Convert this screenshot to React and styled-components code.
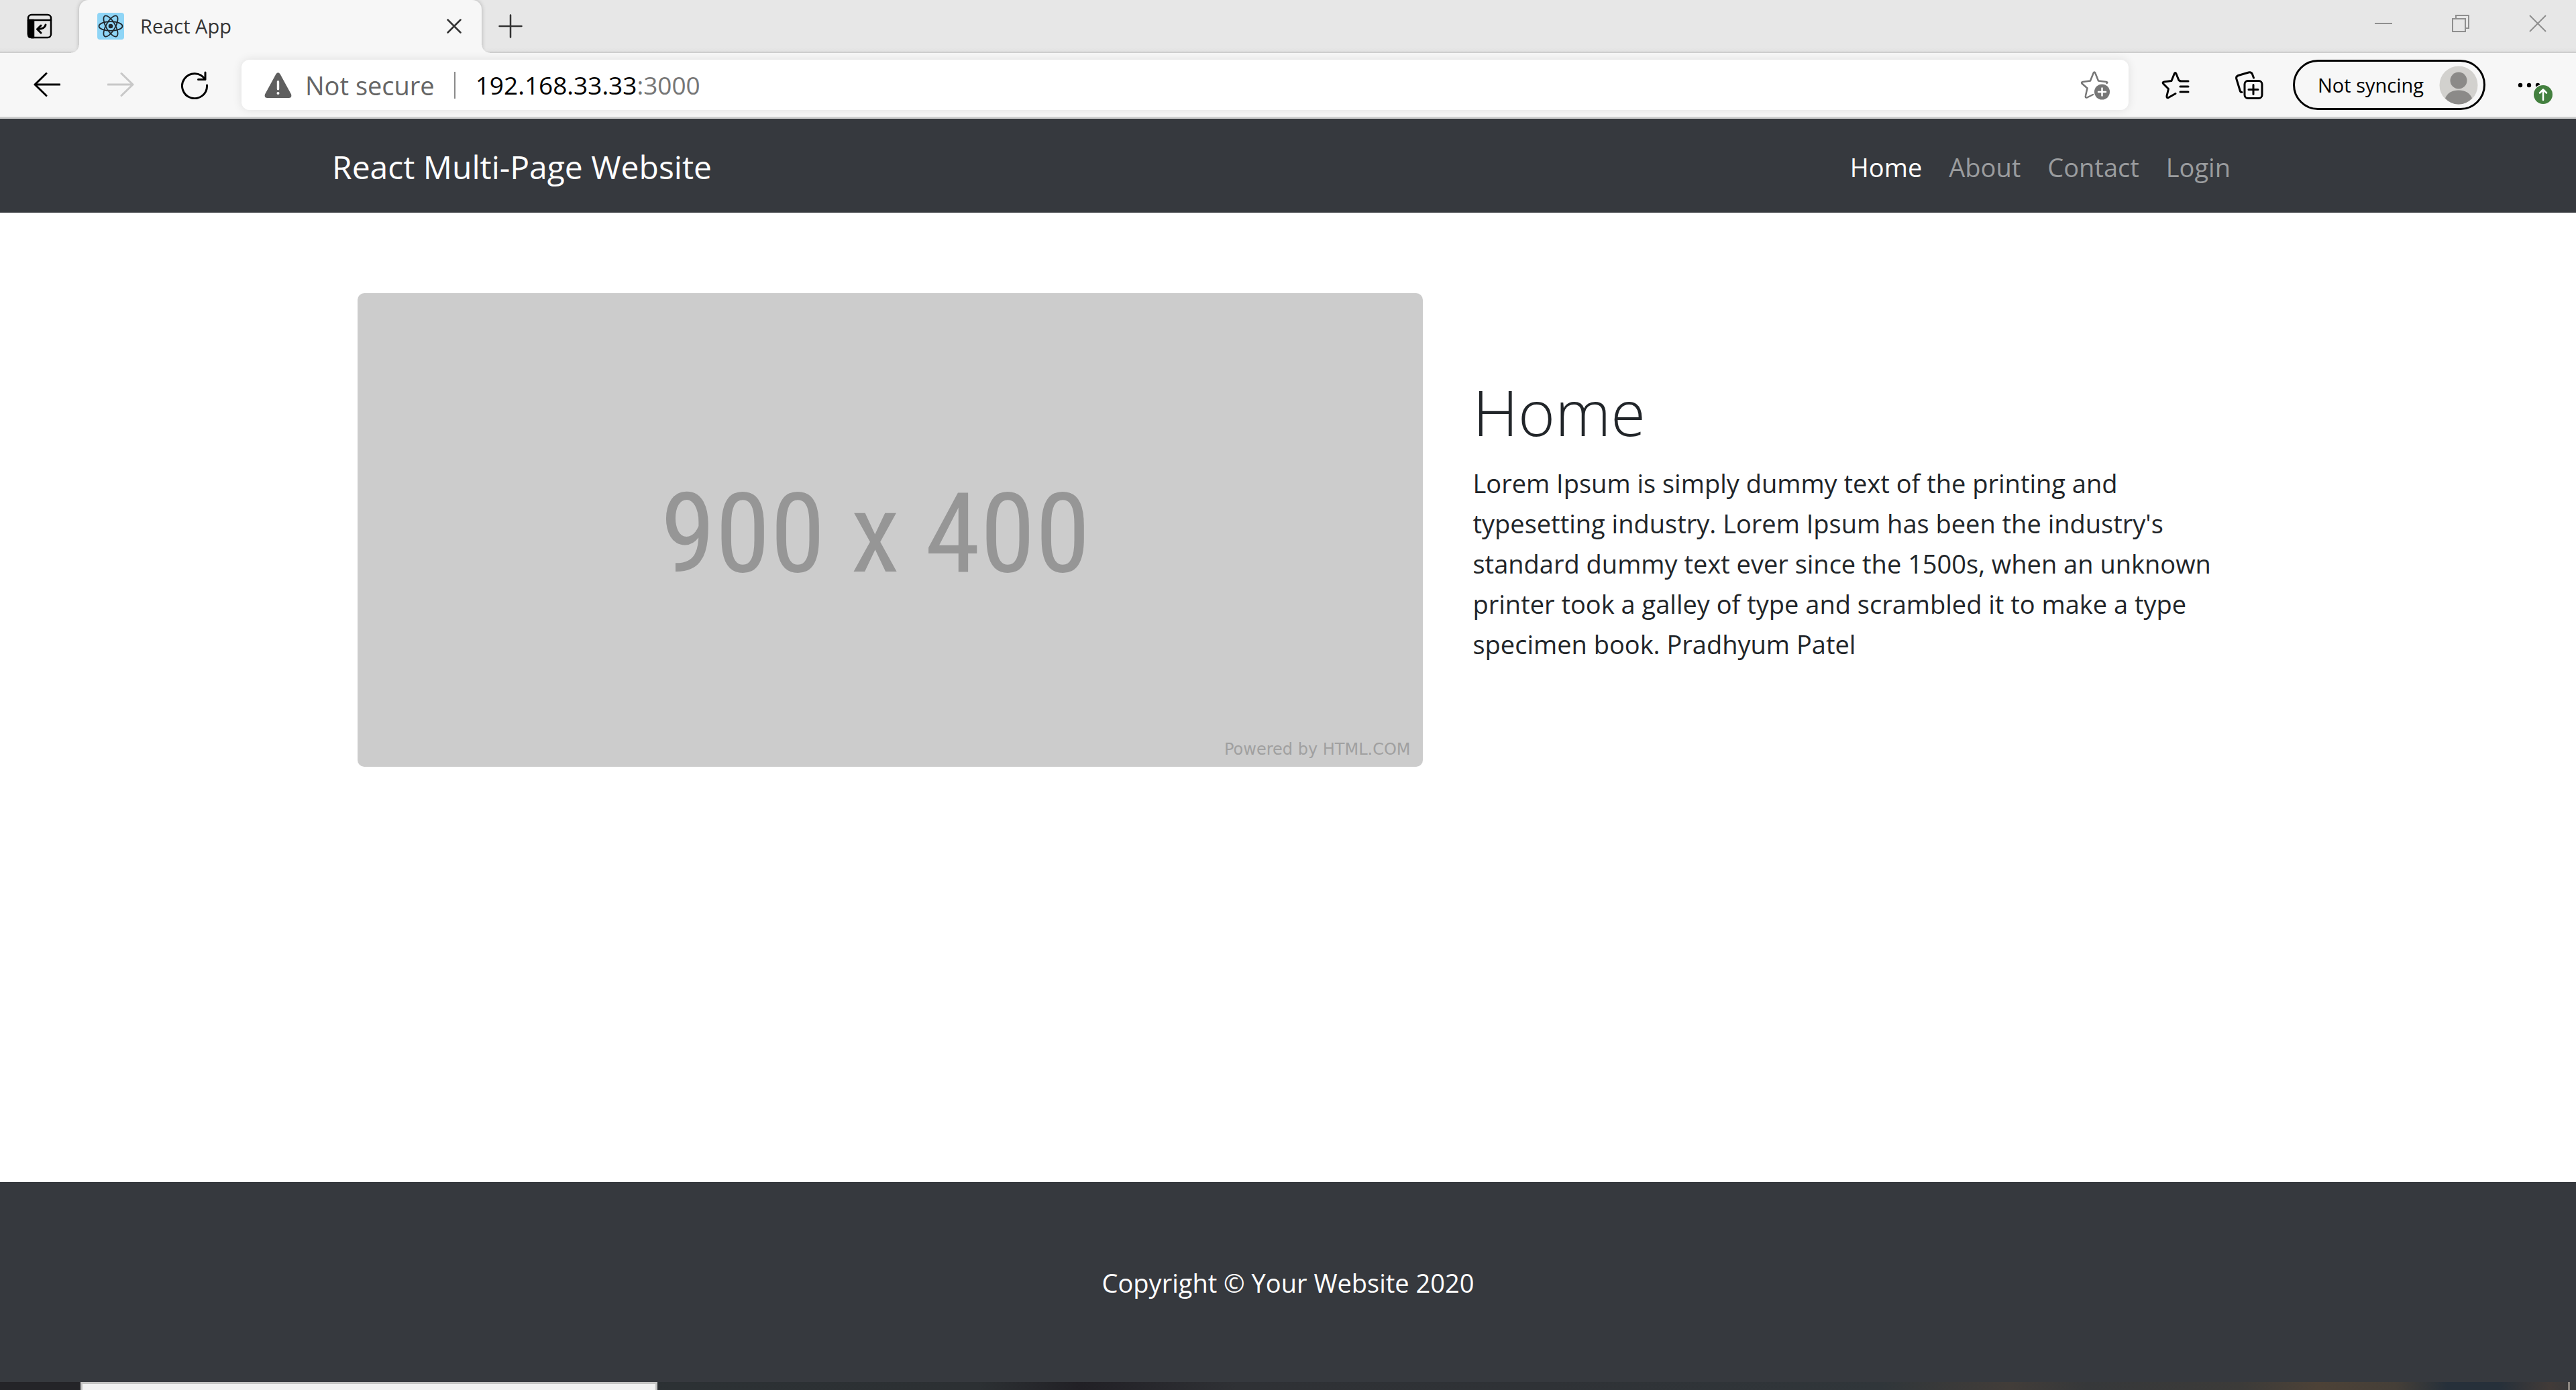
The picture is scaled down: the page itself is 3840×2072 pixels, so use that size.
import React from "react";
import styled, { createGlobalStyle } from "styled-components";

const GlobalStyle = createGlobalStyle`
  * {
    box-sizing: border-box;
  }
  body {
    margin: 0;
    background: #fff;
    color: #212529;
    font-family: "Open Sans", "Noto Sans", sans-serif;
    font-size: 38px;
    line-height: 60px;
  }
`;

const Window = styled.div`
  display: flex;
  flex-direction: column;
  min-height: 100vh;
`;

/* ---------- browser chrome ---------- */

const BareButton = styled.button`
  display: flex;
  align-items: center;
  justify-content: center;
  flex: none;
  padding: 0;
  border: 0;
  background: none;
  color: inherit;
  font: inherit;
`;

const TitleBar = styled.header`
  display: flex;
  height: 79px;
  color: #333;
  background: linear-gradient(#e7e7e7 71px, #e2e2e2 76px, #c8c8c8);
`;

const TitleButton = styled(BareButton)`
  width: ${(p) => p.$width}px;
  height: ${(p) => p.$height || 77}px;
  color: ${(p) => p.$color || "#333"};
`;

const Tab = styled.div`
  position: relative;
  display: flex;
  align-items: center;
  gap: 24px;
  width: 600px;
  padding: 0 30px 2px 27px;
  border-radius: 14px 14px 0 0;
  background: #f7f7f7;
  box-shadow: 0 0 6px rgba(0, 0, 0, 0.25);
  font-size: 29px;

  &::before,
  &::after {
    content: "";
    position: absolute;
    bottom: 0;
    width: 12px;
    height: 12px;
  }
  &::before {
    right: 100%;
    background: radial-gradient(circle at 0 0, transparent 11px, #f7f7f7 12px);
  }
  &::after {
    left: 100%;
    background: radial-gradient(circle at 100% 0, transparent 11px, #f7f7f7 12px);
  }
`;

const TabTitle = styled.span`
  flex: 1;
`;

const WindowControls = styled.div`
  display: flex;
  margin-left: auto;
`;

const Toolbar = styled.div`
  position: relative;
  display: flex;
  align-items: center;
  height: 98px;
  padding: 0 15px;
  border-bottom: 3px solid #cecfcf;
  background: #f7f7f7;
  color: #000;
`;

const ToolButton = styled(BareButton)`
  width: 110px;
  height: 75px;
  color: ${(p) => (p.$faded ? "#c8c8c8" : "#000")};
`;

const AddressBar = styled.div`
  display: flex;
  align-items: center;
  flex: 1;
  height: 75px;
  margin: 0 15px;
  padding: 0 28px 0 34px;
  border-radius: 12px;
  background: #fff;
  box-shadow: 0 0 14px rgba(0, 0, 0, 0.1);
  color: #666;
`;

const Security = styled(BareButton)`
  gap: 20px;
  padding-right: 29px;
  border-right: 2px solid #8a8a8a;
  height: 40px;
`;

const Url = styled.label`
  display: flex;
  align-items: center;
  flex: 1;
  padding-left: 30px;
  font-size: 37px;
`;

const UrlInput = styled.input`
  field-sizing: content;
  padding: 0;
  border: 0;
  outline: 0;
  background: none;
  color: #000;
  font: inherit;
`;

const UrlPort = styled.span`
  color: #767676;
`;

const Profile = styled(BareButton)`
  justify-content: space-between;
  width: 287px;
  height: 75px;
  margin: 0 10px;
  padding: 0 8px 0 34px;
  border: 3px solid #000;
  border-radius: 38px;
  font-size: 29px;
`;

/* ---------- web page ---------- */

const NavBar = styled.nav`
  padding: 22px 0 18px;
  background: #36393e;
  color: #fff;
`;

const Container = styled.div`
  display: flex;
  align-items: center;
  width: 100%;
  max-width: 2850px;
  margin: 0 auto;
`;

const Brand = styled.a`
  color: #fff;
  font-size: 48px;
  line-height: 100px;
  text-decoration: none;
`;

const NavList = styled.ul`
  display: flex;
  margin: 0 0 0 auto;
  padding: 0;
  list-style: none;
`;

const NavLink = styled.a`
  display: block;
  padding: 20px;
  color: ${(p) => (p.$active ? "#fff" : "#9a9c9e")};
  text-decoration: none;
`;

const Main = styled.main`
  flex: 1;
  padding: 120px 0;
`;

const Column = styled.div`
  flex: none;
  width: calc(100% * ${(p) => p.$span} / 12);
  padding: 0 37px 0 38px;
`;

const Placeholder = styled.figure`
  display: grid;
  grid-template-rows: 1fr auto 1fr;
  aspect-ratio: 900 / 400;
  margin: 0;
  padding: 22px 18px 10px;
  border-radius: 10px;
  background: #ccc;
  color: #969696;
`;

const PlaceholderSize = styled.div`
  grid-row: 2;
  padding-right: 44px;
  font-family: "Roboto Condensed", "Liberation Sans Narrow", "Liberation Sans", sans-serif;
  font-size: 166px;
  line-height: 180px;
  text-align: center;
`;

const PlaceholderCredit = styled.figcaption`
  grid-row: 3;
  align-self: end;
  color: #a0a0a0;
  font-family: "DejaVu Sans", sans-serif;
  font-size: 24px;
  line-height: 32px;
  text-align: right;
`;

const Title = styled.h1`
  margin: 0 0 12px;
  font-size: 94px;
  font-weight: 300;
  line-height: 128px;
`;

const Paragraph = styled.p`
  margin: 0 0 40px;
`;

const Footer = styled.footer`
  padding: 120px 0 118px;
  background: #36393e;
  color: #fff;
  text-align: center;
`;

/* ---------- desktop behind the window ---------- */

const Desktop = styled.div`
  display: flex;
  height: 12px;
  padding: 0 9px 0 120px;
  justify-content: space-between;
  background: linear-gradient(
    90deg,
    #242428 0%,
    #242428 10%,
    #2c3134 26%,
    #2c3033 38%,
    #212025 42%,
    #2f3135 48%,
    #2f3236 60%,
    #30363a 73%,
    #423d39 78%,
    #36383a 81%,
    #3c3b39 87%,
    #4d4237 90%,
    #453f38 93%,
    #26303a 95%,
    #26303a 97%,
    #423b38 99%,
    #36393c 100%
  );
`;

const BackgroundWindow = styled.div`
  width: 860px;
  border: 3px solid #c4c4c3;
  border-bottom: 0;
  background: #f2f2f2;
`;

const DesktopEdge = styled.div`
  width: 3px;
  background: #8c8680;
`;

/* ---------- icons ---------- */

const Icon = ({ size = 40, height, sw = 2.5, children, ...rest }) => (
  <svg
    width={size}
    height={height || size}
    viewBox={`0 0 ${size} ${height || size}`}
    fill="none"
    stroke="currentColor"
    strokeWidth={sw}
    strokeLinecap="round"
    strokeLinejoin="round"
    aria-hidden="true"
    {...rest}
  >
    {children}
  </svg>
);

const TabActionsIcon = () => (
  <Icon size={38} color="#000">
    <rect x="2" y="2" width="34" height="34" rx="5" />
    <path d="M2 10H36" />
    <path d="M2 10H10V36H7Q2 36 2 31Z" fill="currentColor" />
    <path d="M28 17Q27 23 16 23.500M21 18L15.500 23.500L21 29" strokeWidth="3" />
  </Icon>
);

const ReactIcon = () => (
  <Icon sw={1.8} color="#20262b">
    <rect width="40" height="40" rx="4" fill="#8fd5f6" stroke="none" />
    <ellipse cx="20" cy="20" rx="17.500" ry="6.800" />
    <ellipse cx="20" cy="20" rx="17.500" ry="6.800" transform="rotate(60 20 20)" />
    <ellipse cx="20" cy="20" rx="17.500" ry="6.800" transform="rotate(120 20 20)" />
    <circle cx="20" cy="20" r="3.300" fill="currentColor" stroke="none" />
  </Icon>
);

const CloseTabIcon = () => (
  <Icon size={22}>
    <path d="M1.500 1.500L20.500 20.500M20.500 1.500L1.500 20.500" />
  </Icon>
);

const PlusIcon = () => (
  <Icon size={36}>
    <path d="M18 1.500V34.500M1.500 18H34.500" />
  </Icon>
);

const MinimizeIcon = () => (
  <Icon size={26} sw={2} strokeLinecap="butt">
    <path d="M0 13H26" />
  </Icon>
);

const RestoreIcon = () => (
  <Icon size={26} sw={2} strokeLinecap="butt" strokeLinejoin="miter">
    <rect x="1" y="6" width="19" height="19" />
    <path d="M6 6V1H25V20H20" />
  </Icon>
);

const CloseWindowIcon = () => (
  <Icon size={26} sw={2} strokeLinecap="butt">
    <path d="M1 1L25 25M25 1L1 25" />
  </Icon>
);

const BackIcon = () => (
  <Icon sw={3}>
    <path d="M19 2.500L2 19L19 35.500M2 19H39" />
  </Icon>
);

const ForwardIcon = () => (
  <Icon sw={3}>
    <path d="M21 2.500L38 19L21 35.500M38 19H1" />
  </Icon>
);

const ReloadIcon = () => (
  <Icon size={42} sw={3}>
    <path d="M36.500 12A18.500 18.500 0 1 0 39.500 21M37 2V12.500H26.500" />
  </Icon>
);

const WarningIcon = () => (
  <Icon size={41} height={38} fill="#5f5f5f" stroke="none">
    <path d="M17.500 2.200Q20.500 -1.500 23.500 2.200L40 32.500Q41.500 38 36.500 38H4.500Q-0.500 38 1 32.500Z" />
    <rect x="18.800" y="12" width="3.400" height="14.500" rx="1.700" fill="#fff" />
    <circle cx="20.500" cy="31" r="2" fill="#fff" />
  </Icon>
);

const AddFavoriteIcon = () => (
  <Icon size={44} color="#767676">
    <path d="M19 36L10 40.500Q7 41 8 37.500L10.500 26.500L2.500 19.500Q1 17.500 4 17L15 15.500L19.800 3.500Q21 1.500 22.200 3.500L27 15.500L38.500 17Q41.500 17.500 39.500 19" />
    <circle cx="32.500" cy="32" r="11.500" fill="currentColor" stroke="none" />
    <path d="M32.500 26.500V37.500M27 32H38" stroke="#fff" />
  </Icon>
);

const FavoritesIcon = () => (
  <Icon size={42} sw={3}>
    <path d="M28 14.500L26 13.800L21.800 3.500Q20.600 1.500 19.400 3.500L15 14.500L4 16Q0.800 16.500 3 19L10.500 26.500L8 37Q7.500 40.500 10.500 39.500L21 33.500" />
    <path d="M28 15H40M28 23H40M28 31H40" />
  </Icon>
);

const CollectionsIcon = () => (
  <Icon size={42} sw={3}>
    <rect x="14" y="14.500" width="26" height="26" rx="5" />
    <path d="M27 20.500V34.500M20 27.500H34" />
    <path d="M10 31.500Q7.500 31.500 7 28.500L1.800 11.500Q0.800 8 4.500 6.500L20 2Q24 1 25.500 4.500L27.500 10" />
  </Icon>
);

const AvatarIcon = () => (
  <Icon size={58} stroke="none">
    <circle cx="29" cy="29" r="28.500" fill="#d2d1ce" />
    <circle cx="29" cy="22" r="12.500" fill="#8b8a88" />
    <path d="M9 48.500Q14 36.500 29 36.500T49 48.500Q41 57.500 29 57.500T9 48.500Z" fill="#8b8a88" />
  </Icon>
);

const MenuIcon = () => (
  <Icon size={74} height={58} stroke="none">
    <g fill="#000">
      <circle cx="24" cy="29" r="3.200" />
      <circle cx="37" cy="29" r="3.200" />
      <circle cx="50" cy="29" r="3.200" />
    </g>
    <circle cx="58" cy="43" r="15.500" fill="#f7f7f7" />
    <circle cx="58" cy="43" r="14" fill="#43803f" />
    <path d="M58 51V36M53 40.500L58 35.500L63 40.500" fill="none" stroke="#fff" strokeWidth="2.500" />
  </Icon>
);

const links = ["Home", "About", "Contact", "Login"];

function BrowserChrome() {
  return (
    <>
      <TitleBar>
        <TitleButton $width={118} aria-label="Tab actions menu">
          <TabActionsIcon />
        </TitleButton>
        <Tab>
          <ReactIcon />
          <TabTitle>React App</TabTitle>
          <BareButton aria-label="Close tab">
            <CloseTabIcon />
          </BareButton>
        </Tab>
        <TitleButton $width={86} aria-label="New tab">
          <PlusIcon />
        </TitleButton>
        <WindowControls>
          <TitleButton $width={115} $height={70} $color="#8f8f8f" aria-label="Minimize">
            <MinimizeIcon />
          </TitleButton>
          <TitleButton $width={115} $height={70} $color="#8f8f8f" aria-label="Restore">
            <RestoreIcon />
          </TitleButton>
          <TitleButton $width={115} $height={70} $color="#8f8f8f" aria-label="Close">
            <CloseWindowIcon />
          </TitleButton>
        </WindowControls>
      </TitleBar>
      <Toolbar>
        <ToolButton aria-label="Back">
          <BackIcon />
        </ToolButton>
        <ToolButton $faded aria-label="Forward">
          <ForwardIcon />
        </ToolButton>
        <ToolButton aria-label="Refresh">
          <ReloadIcon />
        </ToolButton>
        <AddressBar>
          <Security>
            <WarningIcon />
            Not secure
          </Security>
          <Url>
            <UrlInput type="text" aria-label="Address" defaultValue="192.168.33.33" />
            <UrlPort>:3000</UrlPort>
          </Url>
          <BareButton aria-label="Add this page to favorites">
            <AddFavoriteIcon />
          </BareButton>
        </AddressBar>
        <ToolButton aria-label="Favorites">
          <FavoritesIcon />
        </ToolButton>
        <ToolButton aria-label="Collections">
          <CollectionsIcon />
        </ToolButton>
        <Profile>
          Not syncing
          <AvatarIcon />
        </Profile>
        <ToolButton aria-label="Settings and more">
          <MenuIcon />
        </ToolButton>
      </Toolbar>
    </>
  );
}

export default function App() {
  return (
    <Window>
      <GlobalStyle />
      <BrowserChrome />
      <NavBar>
        <Container>
          <Brand href="#home">React Multi-Page Website</Brand>
          <NavList>
            {links.map((name) => (
              <li key={name}>
                <NavLink href={`#${name.toLowerCase()}`} $active={name === "Home"}>
                  {name}
                </NavLink>
              </li>
            ))}
          </NavList>
        </Container>
      </NavBar>
      <Main>
        <Container>
          <Column $span={7}>
            <Placeholder>
              <PlaceholderSize>900 x 400</PlaceholderSize>
              <PlaceholderCredit>Powered by HTML.COM</PlaceholderCredit>
            </Placeholder>
          </Column>
          <Column $span={5}>
            <Title>Home</Title>
            <Paragraph>
              Lorem Ipsum is simply dummy text of the printing and typesetting industry. Lorem
              Ipsum has been the industry's standard dummy text ever since the 1500s, when an
              unknown printer took a galley of type and scrambled it to make a type specimen
              book. Pradhyum Patel
            </Paragraph>
          </Column>
        </Container>
      </Main>
      <Footer>Copyright © Your Website 2020</Footer>
      <Desktop>
        <BackgroundWindow />
        <DesktopEdge />
      </Desktop>
    </Window>
  );
}
